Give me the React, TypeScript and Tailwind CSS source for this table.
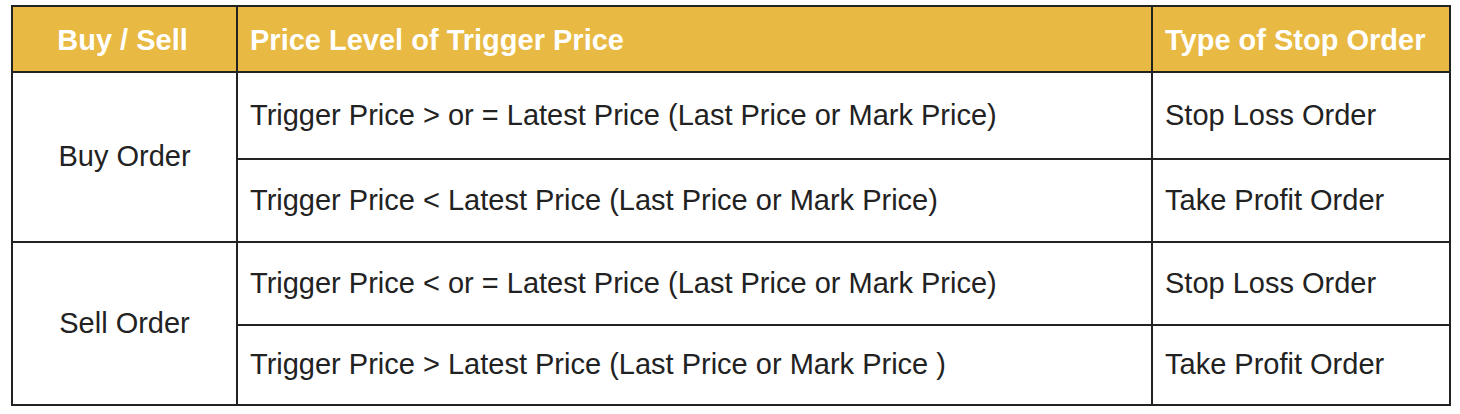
const rows = [
  {
    side: "Buy Order",
    items: [
      {
        level: "Trigger Price > or = Latest Price (Last Price or Mark Price)",
        type: "Stop Loss Order",
        h: "h-[87px]",
      },
      {
        level: "Trigger Price < Latest Price (Last Price or Mark Price)",
        type: "Take Profit Order",
        h: "h-[83px]",
      },
    ],
  },
  {
    side: "Sell Order",
    items: [
      {
        level: "Trigger Price < or = Latest Price (Last Price or Mark Price)",
        type: "Stop Loss Order",
        h: "h-[83px]",
      },
      {
        level: "Trigger Price > Latest Price (Last Price or Mark Price )",
        type: "Take Profit Order",
        h: "h-[80px]",
      },
    ],
  },
];

export default function App() {
  return (
    <div className="w-[1460px] h-[414px] bg-white pl-[11px] pt-[5px] font-['Liberation_Sans',Arial,sans-serif]">
      <table className="border-collapse w-[1438px] table-fixed text-[29px] text-[#222]">
        <colgroup>
          <col className="w-[225px]" />
          <col className="w-[915px]" />
          <col className="w-[298px]" />
        </colgroup>
        <thead>
          <tr className="h-[66px] bg-[#e8b943] text-white font-bold">
            <th className="border-2 border-[#222] text-center pt-[3px] pr-[4px] font-bold">
              Buy / Sell
            </th>
            <th className="border-2 border-[#222] text-left pt-[3px] pl-[12px] font-bold">
              Price Level of Trigger Price
            </th>
            <th className="border-2 border-[#222] text-left pt-[3px] pl-[12px] font-bold">
              Type of Stop Order
            </th>
          </tr>
        </thead>
        <tbody>
          {rows.map((group) =>
            group.items.map((item, i) => (
              <tr key={group.side + i} className={item.h}>
                {i === 0 && (
                  <td
                    rowSpan={2}
                    className="border-2 border-[#222] text-center align-middle"
                  >
                    {group.side}
                  </td>
                )}
                <td className="border-2 border-[#222] pl-[12px]">{item.level}</td>
                <td className="border-2 border-[#222] pl-[12px]">{item.type}</td>
              </tr>
            ))
          )}
        </tbody>
      </table>
    </div>
  );
}
